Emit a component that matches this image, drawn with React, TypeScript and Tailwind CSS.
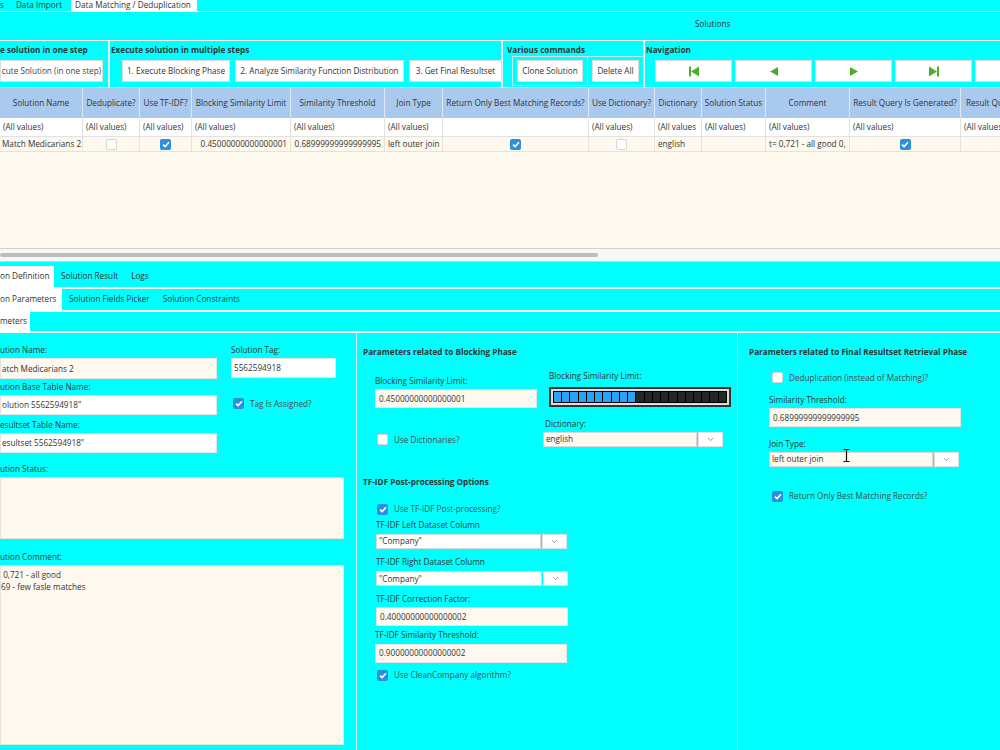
import { ChevronDown } from 'lucide-react';

const font = "font-['Open_Sans',sans-serif]";

function Check({ checked = false }: { checked?: boolean }) {
  return checked ? (
    <span className="inline-flex h-[11px] w-[11px] shrink-0 items-center justify-center rounded-[2px] bg-[#2d8fe0]">
      <svg width="8" height="7" viewBox="0 0 8 7">
        <path d="M1 3.6 L3.1 5.6 L7 1.2" fill="none" stroke="white" strokeWidth="1.6" />
      </svg>
    </span>
  ) : (
    <span className="inline-block h-[11px] w-[11px] shrink-0 rounded-[2px] border border-[#d5d5d5] bg-white" />
  );
}

function CheckRow({ checked, label, className = '' }: { checked?: boolean; label: string; className?: string }) {
  return (
    <div className={`flex items-center gap-[6px] whitespace-nowrap text-[#4a4a4a] ${className}`}>
      <Check checked={checked} />
      <span>{label}</span>
    </div>
  );
}

function Field({ value, className = '', cream = true }: { value: string; className?: string; cream?: boolean }) {
  return (
    <div
      className={`flex shrink-0 items-center whitespace-nowrap border border-[#e4e4e4] px-[5px] ${cream ? 'bg-[#fdf9ee]' : 'bg-white'} ${className}`}
    >
      {value}
    </div>
  );
}

function Combo({ value, w, cream = false }: { value: string; w: string; cream?: boolean }) {
  return (
    <div className="flex h-[15px] items-stretch">
      <div
        className={`flex shrink-0 items-center whitespace-nowrap border border-[#d8d8d8] px-[2px] ${cream ? 'bg-[#fdf9ee]' : 'bg-white'} ${w}`}
      >
        {value}
      </div>
      <div className="ml-px flex w-[25px] shrink-0 items-center justify-center border border-[#e0e0e0] bg-white">
        <ChevronDown className="h-[9px] w-[9px] text-[#777]" strokeWidth={2} />
      </div>
    </div>
  );
}

function NavIcon({ kind }: { kind: 'first' | 'prev' | 'next' | 'last' }) {
  const g = '#4cae2c';
  return (
    <svg width="12" height="11" viewBox="0 0 12 11">
      {kind === 'first' && (
        <>
          <rect x="1" y="0.5" width="2" height="10" fill={g} />
          <path d="M11 0.5 L3 5.5 L11 10.5 Z" fill={g} />
        </>
      )}
      {kind === 'prev' && <path d="M10 1 L2 5.5 L10 10 Z" fill={g} />}
      {kind === 'next' && <path d="M2 1 L10 5.5 L2 10 Z" fill={g} />}
      {kind === 'last' && (
        <>
          <path d="M1 0.5 L9 5.5 L1 10.5 Z" fill={g} />
          <rect x="9" y="0.5" width="2" height="10" fill={g} />
        </>
      )}
    </svg>
  );
}

const cols = [
  { h: 'Solution Name', w: 'w-[83px]' },
  { h: 'Deduplicate?', w: 'w-[57px]' },
  { h: 'Use TF-IDF?', w: 'w-[52px]' },
  { h: 'Blocking Similarity Limit', w: 'w-[99px]' },
  { h: 'Similarity Threshold', w: 'w-[94px]' },
  { h: 'Join Type', w: 'w-[58px]' },
  { h: 'Return Only Best Matching Records?', w: 'w-[146px]' },
  { h: 'Use Dictionary?', w: 'w-[66px]' },
  { h: 'Dictionary', w: 'w-[47px]' },
  { h: 'Solution Status', w: 'w-[64px]' },
  { h: 'Comment', w: 'w-[84px]' },
  { h: 'Result Query Is Generated?', w: 'w-[111px]' },
  { h: 'Result Query', w: 'w-[60px]' },
];

const filters = [
  '(All values)', '(All values)', '(All values)', '(All values)', '(All values)', '(All values)', '',
  '(All values)', '(All values', '(All values)', '(All values)', '(All values)', '(All values)',
];

const btn = 'flex h-[22px] shrink-0 items-center justify-center whitespace-nowrap border border-[#dcdcdc] bg-white';

export default function App() {
  return (
    <div className={`relative h-[750px] w-[1000px] overflow-hidden bg-[#00ffff] text-[8.2px] leading-none text-[#333] ${font}`}>
      {/* top tabs */}
      <div className="flex h-[12px] items-start border-b border-white">
        <span className="pt-px">s</span>
        <span className="ml-[12px] pt-px">Data Import</span>
        <span className="ml-[9px] flex h-[11px] w-[126px] items-start bg-white pl-[4px] pt-px">
          Data Matching / Deduplication
        </span>
      </div>
      <div className="flex h-[29px] items-center border-b border-white pb-[4px] pl-[695px]">Solutions</div>

      {/* toolbar */}
      <div className="flex h-[47px] border-b border-[#cfe3e3]">
        <div className="flex w-[110px] shrink-0 flex-col border-r-2 border-[#e8f4f4]">
          <div className="mt-[5px] whitespace-nowrap font-bold">e solution in one step</div>
          <div className={`mt-[6px] w-[103px] text-[#444] ${btn}`}>cute Solution (in one step)</div>
        </div>
        <div className="flex w-[393px] shrink-0 flex-col border-r-2 border-[#e8f4f4] pl-px">
          <div className="mt-[5px] whitespace-nowrap font-bold">Execute solution in multiple steps</div>
          <div className="mt-[6px] flex gap-[5px] pl-[11px]">
            <div className={`w-[108px] ${btn}`}>1. Execute Blocking Phase</div>
            <div className={`w-[169px] ${btn}`}>2. Analyze Similarity Function Distribution</div>
            <div className={`w-[93px] ${btn}`}>3. Get Final Resultset</div>
          </div>
        </div>
        <div className="flex w-[142px] shrink-0 flex-col border-r-2 border-[#e8f4f4] pl-[4px]">
          <div className="mt-[5px] whitespace-nowrap font-bold">Various commands</div>
          <div className="ml-[5px] mt-[2px] flex">
            <div className="flex h-[30px] w-[76px] shrink-0 items-center justify-center border border-[#c9e6e6]">
              <div className={`w-[66px] ${btn}`}>Clone Solution</div>
            </div>
            <div className="flex h-[30px] w-[56px] shrink-0 items-center justify-center border border-l-0 border-[#c9e6e6]">
              <div className={`w-[47px] ${btn}`}>Delete All</div>
            </div>
          </div>
        </div>
        <div className="flex flex-1 flex-col pl-[1px]">
          <div className="mt-[5px] whitespace-nowrap font-bold">Navigation</div>
          <div className="mt-[6px] flex gap-[3px] pl-[9px]">
            {(['first', 'prev', 'next', 'last', 'none'] as const).map((k) => (
              <div key={k} className={`w-[77px] ${btn}`}>
                {k !== 'none' && <NavIcon kind={k} />}
              </div>
            ))}
          </div>
        </div>
      </div>

      {/* grid */}
      <div className="h-[160px] bg-[#fdf9ee]">
        <div className="flex h-[30px] bg-[#a9caee]">
          {cols.map((c) => (
            <div key={c.h} className={`flex shrink-0 items-center justify-center whitespace-nowrap border-r border-[#dbe8f6] ${c.w}`}>
              {c.h}
            </div>
          ))}
        </div>
        <div className="flex h-[19px] border-b border-[#e2e2e2] bg-white">
          {cols.map((c, i) => (
            <div key={c.h} className={`flex shrink-0 items-center overflow-hidden whitespace-nowrap border-r border-[#e2e2e2] pl-[3px] ${c.w}`}>
              {filters[i]}
            </div>
          ))}
        </div>
        <div className="flex h-[15px] whitespace-nowrap border-b border-[#e6e2d6]">
          <div className="flex w-[83px] shrink-0 items-center overflow-hidden border-r border-[#e6e2d6] pl-[2px]">Match Medicarians 2</div>
          <div className="flex w-[57px] shrink-0 items-center justify-center border-r border-[#e6e2d6]"><Check /></div>
          <div className="flex w-[52px] shrink-0 items-center justify-center border-r border-[#e6e2d6]"><Check checked /></div>
          <div className="flex w-[99px] shrink-0 items-center justify-end border-r border-[#e6e2d6] pr-[3px]">0.45000000000000001</div>
          <div className="flex w-[94px] shrink-0 items-center justify-end border-r border-[#e6e2d6] pr-[3px]">0.68999999999999995</div>
          <div className="flex w-[58px] shrink-0 items-center border-r border-[#e6e2d6] pl-[3px]">left outer join</div>
          <div className="flex w-[146px] shrink-0 items-center justify-center border-r border-[#e6e2d6]"><Check checked /></div>
          <div className="flex w-[66px] shrink-0 items-center justify-center border-r border-[#e6e2d6]"><Check /></div>
          <div className="flex w-[47px] shrink-0 items-center border-r border-[#e6e2d6] pl-[3px]">english</div>
          <div className="w-[64px] shrink-0 border-r border-[#e6e2d6]" />
          <div className="flex w-[84px] shrink-0 items-center overflow-hidden border-r border-[#e6e2d6] pl-[3px]">t= 0,721 - all good 0,</div>
          <div className="flex w-[111px] shrink-0 items-center justify-center border-r border-[#e6e2d6]"><Check checked /></div>
          <div className="w-[60px] shrink-0" />
        </div>
      </div>
      {/* scrollbar */}
      <div className="flex h-[14px] items-center border-y border-[#d0d0d0] bg-[#f7f7f7]">
        <div className="h-[4px] w-[598px] rounded-[2px] bg-[#bdbdbd]" />
      </div>

      {/* sub tabs */}
      <div className="flex h-[27px] items-end border-b-2 border-white">
        <div className="flex h-[21px] w-[54px] shrink-0 items-center whitespace-nowrap bg-white">on Definition</div>
        <div className="flex h-[21px] items-center whitespace-nowrap pl-[7px]">Solution Result</div>
        <div className="flex h-[21px] items-center pl-[13px]">Logs</div>
      </div>
      <div className="flex h-[23px] items-end border-b-2 border-white">
        <div className="flex h-[21px] w-[62px] shrink-0 items-center whitespace-nowrap bg-white">on Parameters</div>
        <div className="flex h-[21px] items-center whitespace-nowrap pl-[7px]">Solution Fields Picker</div>
        <div className="flex h-[21px] items-center whitespace-nowrap pl-[13px]">Solution Constraints</div>
      </div>
      <div className="flex h-[21px] items-end border-b-2 border-white">
        <div className="flex h-[19px] w-[30px] items-center bg-white">meters</div>
      </div>

      {/* panels */}
      <div className="flex h-[418px]">
        {/* left */}
        <div className="flex w-[357px] shrink-0 flex-col border-r border-[#d8eeee] pt-[13px]">
          <div className="flex">
            <div className="flex w-[231px] shrink-0 flex-col">
              <div>ution Name:</div>
              <Field value="atch Medicarians 2" className="mt-[4px] h-[21px] w-[217px] pl-[1px]" />
              <div className="mt-[4px]">ution Base Table Name:</div>
              <Field value={'olution 5562594918"'} cream={false} className="mt-[4px] h-[20px] w-[217px] pl-[1px]" />
              <div className="mt-[6px]">esultset Table Name:</div>
              <Field value={'esultset 5562594918"'} cream={false} className="mt-[3px] h-[20px] w-[217px] pl-[1px]" />
            </div>
            <div className="flex flex-col">
              <div>Solution Tag:</div>
              <Field value="5562594918" cream={false} className="mt-[4px] h-[20px] w-[105px] pl-[2px]" />
              <CheckRow checked label="Tag Is Assigned?" className="mt-[20px] pl-[2px]" />
            </div>
          </div>
          <div className="mt-[12px]">ution Status:</div>
          <div className="mt-[4px] h-[62px] w-[344px] border border-[#e8e4d8] bg-[#fdf9ee]" />
          <div className="mt-[14px]">ution Comment:</div>
          <div className="mt-[4px] h-[180px] w-[344px] border border-[#e8e4d8] bg-[#fdf9ee] pt-[3px] leading-[12px]">
            <div>&nbsp;0,721 - all good</div>
            <div>69 - few fasle matches</div>
          </div>
        </div>

        {/* middle */}
        <div className="flex w-[381px] shrink-0 flex-col border-r border-[#d8eeee] pl-[6px] pt-[15px]">
          <div className="font-bold">Parameters related to Blocking Phase</div>
          <div className="mt-[16px] flex">
            <div className="flex w-[186px] shrink-0 flex-col pl-[12px]">
              <div className="mt-[5px]">Blocking Similarity Limit:</div>
              <Field value="0.45000000000000001" className="mt-[4px] h-[19px] w-[162px] pl-[3px]" />
              <CheckRow label="Use Dictionaries?" className="mt-[26px] pl-[2px]" />
            </div>
            <div className="flex flex-col">
              <div>Blocking Similarity Limit:</div>
              <div className="mt-[7px] flex h-[20px] w-[182px] items-center border-2 border-[#333] bg-[#ddd] p-[2px]">
                <div className="flex h-full w-full gap-px bg-black p-px">
                  {Array.from({ length: 21 }, (_, i) => (
                    <div key={i} className={`flex-1 ${i < 10 ? 'bg-[#2aa3f5]' : 'bg-[#262626]'}`} />
                  ))}
                </div>
              </div>
              <div className="-ml-[4px] mt-[13px]">Dictionary:</div>
              <div className="-ml-[6px] mt-[3px]">
                <Combo value="english" w="w-[154px]" cream />
              </div>
            </div>
          </div>
          <div className="mt-[31px] font-bold">TF-IDF Post-processing Options</div>
          <div className="flex flex-col pl-[13px]">
            <CheckRow checked label="Use TF-IDF Post-processing?" className="mt-[18px] pl-px" />
            <div className="mt-[6px]">TF-IDF Left Dataset Column</div>
            <div className="mt-[5px]"><Combo value={'"Company"'} w="w-[165px]" /></div>
            <div className="mt-[9px]">TF-IDF Right Dataset Column</div>
            <div className="mt-[5px]"><Combo value={'"Company"'} w="w-[166px]" /></div>
            <div className="mt-[9px]">TF-IDF Correction Factor:</div>
            <Field value="0.40000000000000002" className="mt-[4px] h-[19px] w-[192px] pl-[3px]" />
            <div className="-ml-px mt-[5px]">TF-IDF Similarity Threshold:</div>
            <Field value="0.90000000000000002" className="-ml-px mt-[4px] h-[19px] w-[192px] pl-[3px]" />
            <CheckRow checked label="Use CleanCompany algorithm?" className="mt-[7px] pl-px" />
          </div>
        </div>

        {/* right */}
        <div className="relative flex flex-1 flex-col pl-[11px] pt-[15px]">
          <div className="whitespace-nowrap font-bold">Parameters related to Final Resultset Retrieval Phase</div>
          <CheckRow label="Deduplication (instead of Matching)?" className="mt-[16px] pl-[23px]" />
          <div className="mt-[13px] pl-[20px]">Similarity Threshold:</div>
          <Field value="0.68999999999999995" className="ml-[20px] mt-[4px] h-[19px] w-[192px] pl-[3px]" />
          <div className="mt-[13px] pl-[20px]">Join Type:</div>
          <div className="ml-[20px] mt-[3px]"><Combo value="left outer join" w="w-[164px]" cream /></div>
          <CheckRow checked label="Return Only Best Matching Records?" className="mt-[24px] pl-[23px]" />
          <svg className="absolute left-[105px] top-[116px]" width="7" height="13" viewBox="0 0 7 13">
            <path d="M0.5 0.5 H6.5 M3.5 0.5 V12.5 M0.5 12.5 H6.5" stroke="#111" strokeWidth="1.2" fill="none" />
          </svg>
        </div>
      </div>
    </div>
  );
}
